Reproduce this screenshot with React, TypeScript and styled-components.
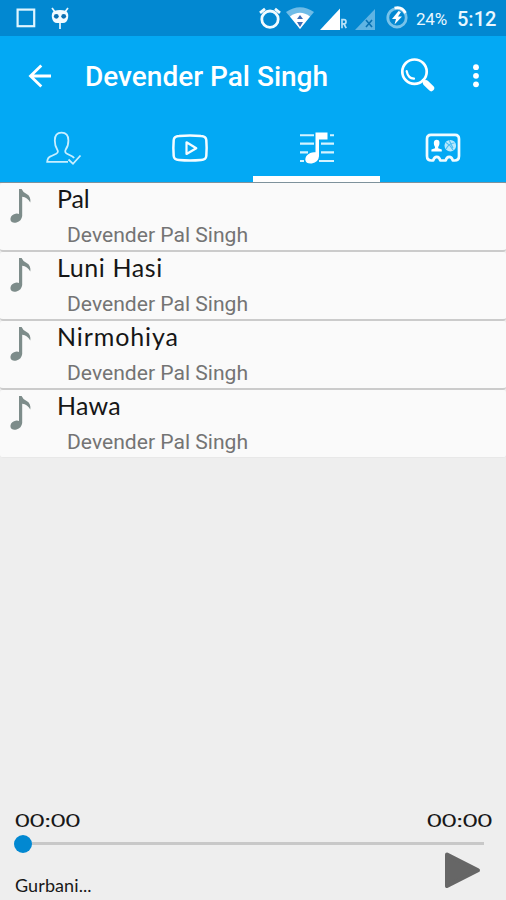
import React from "react";
import styled, { createGlobalStyle } from "styled-components";

const GlobalStyle = createGlobalStyle`
  * { box-sizing: border-box; }
  body { margin: 0; background: #eeeeee; }
`;

const Screen = styled.main`
  width: 506px;
  height: 900px;
  display: flex;
  flex-direction: column;
  background: #eeeeee;
  overflow: hidden;
  font-family: Roboto, sans-serif;
`;

const StatusBar = styled.header`
  height: 36px;
  flex: none;
  display: flex;
  align-items: flex-start;
  background: #0288d1;
  color: #e9f7ff;
`;

const Glyph = styled.svg<{ $gap?: number }>`
  flex: none;
  display: block;
  margin-left: ${(p) => p.$gap ?? 0}px;
  overflow: visible;
`;

const Spacer = styled.div`
  flex: 1;
`;

const Battery = styled.span`
  width: 49px;
  padding-left: 8px;
  font-size: 17px;
  line-height: 38px;
  letter-spacing: -0.2px;
  white-space: nowrap;
`;

const Clock = styled.span`
  width: 49px;
  font-size: 20px;
  font-weight: 500;
  line-height: 38px;
  letter-spacing: 0;
`;

const AppBar = styled.div`
  height: 79px;
  flex: none;
  display: flex;
  align-items: center;
  background: #03a9f4;
  color: #fff;
`;

const Title = styled.h1`
  margin: 3px 0 0 33px;
  flex: 1;
  font-size: 28px;
  line-height: 36px;
  font-weight: 500;
  white-space: nowrap;
`;

const Tabs = styled.nav`
  height: 67px;
  flex: none;
  display: grid;
  grid-template-columns: repeat(4, 1fr);
  background: #03a9f4;
`;

const Tab = styled.div<{ $active?: boolean }>`
  display: flex;
  justify-content: center;
  padding: 16px 0 0 1px;
  border-bottom: 6px solid ${(p) => (p.$active ? "#ffffff" : "transparent")};
`;

const List = styled.ul`
  list-style: none;
  margin: 0;
  padding: 0;
  flex: none;
  border-top: 1px solid #7e929c;
`;

const Row = styled.li`
  height: 69px;
  display: flex;
  background: #fafafa;
  border-radius: 3px;
  border-bottom: 2px solid #cbcbcb;
  &:last-child {
    height: 68px;
    border-bottom: 1px solid #e8e8e8;
  }
`;

const RowText = styled.div`
  margin-left: 25px;
`;

const Song = styled.div<{ $tracking: number }>`
  font-family: Lato, sans-serif;
  font-size: 25px;
  line-height: 30px;
  color: #161616;
  letter-spacing: ${(p) => p.$tracking}px;
  white-space: nowrap;
`;

const Artist = styled.div`
  margin: 9px 0 0 10px;
  font-size: 21.1px;
  line-height: 26px;
  color: #747474;
  white-space: nowrap;
`;

const Player = styled.footer`
  height: 101px;
  margin-top: auto;
  flex: none;
  display: flex;
  flex-direction: column;
  font-family: Lato, sans-serif;
  color: #181818;
`;

const Times = styled.div`
  height: 36px;
  padding: 8px 14px 0 15px;
  display: flex;
  justify-content: space-between;
`;

const Time = styled.span<{ $end?: boolean }>`
  font-size: 18px;
  line-height: 26px;
  transform: scaleX(1.41);
  transform-origin: ${(p) => (p.$end ? "right" : "left")};
`;

const Seek = styled.div`
  height: 17px;
  padding: 0 22px 0 14px;
  display: flex;
  align-items: center;
`;

const Thumb = styled.div`
  width: 18px;
  height: 18px;
  border-radius: 50%;
  background: #0288d1;
`;

const Track = styled.div`
  flex: 1;
  height: 3px;
  background: #c8c8c8;
`;

const NowPlaying = styled.div`
  flex: 1;
  display: flex;
  justify-content: space-between;
  padding: 0 24px 0 15px;
`;

const TrackName = styled.span`
  padding-top: 21px;
  font-size: 18px;
  line-height: 24px;
  letter-spacing: 0.1px;
`;

const SquareIcon = () => (
  <Glyph $gap={16} width="20" height="36" fill="none" stroke="#dff5ff" strokeWidth="2.2">
    <rect x="1.6" y="9.6" width="16.6" height="16.6" />
  </Glyph>
);

const RobotIcon = () => (
  <Glyph $gap={15} width="18" height="36">
    <path d="M1 8l3 4M17 8l-3 4M9 22v7" stroke="#e9f7ff" strokeWidth="1.7" fill="none" />
    <path d="M3 11Q9 9 15 11Q18 13 17 18Q16 23 12 23H6Q2 23 1 18Q0 13 3 11Z" fill="#f2fbff" />
    <circle cx="5.3" cy="16.3" r="2.4" fill="#0b70b2" />
    <circle cx="12.7" cy="16.3" r="2.4" fill="#0b70b2" />
  </Glyph>
);

const AlarmIcon = () => (
  <Glyph width="22" height="36" fill="none" stroke="#f2fbff">
    <circle cx="11" cy="19.2" r="8.2" strokeWidth="2.8" />
    <path d="M1 12.8l5-4M21 12.8l-5-4" strokeWidth="2.8" />
  </Glyph>
);

const WifiIcon = () => (
  <Glyph $gap={5} width="28" height="36">
    <path d="M0 12Q14 2.5 28 12L14 29Z" fill="#6fbce7" />
    <path d="M4 16.5Q14 9 24 16.5L14 29Z" fill="#fff" />
    <path d="M11 19l3-4 3 4zM11 22h6l-3 5z" fill="#3c6db8" />
  </Glyph>
);

const SignalIcon = () => (
  <Glyph $gap={6} width="28" height="36">
    <path d="M0 30L20 8.5V30Z" fill="#fff" />
    <path d="M22 28.2V19.7h2q2 0 2 2.1t-2 2.1h-2M24 24l2.2 4.2" fill="none" stroke="#b9e1f7" strokeWidth="1.7" />
  </Glyph>
);

const NoSignalIcon = () => (
  <Glyph $gap={7} width="20" height="36">
    <path d="M0 30L20 9V30Z" fill="#60b4e3" />
    <path d="M11 20l6 7M17 20l-6 7" stroke="#0871b3" strokeWidth="1.6" />
  </Glyph>
);

const ChargeIcon = () => (
  <Glyph $gap={11} width="22" height="36">
    <circle cx="11" cy="17.8" r="9.2" fill="none" stroke="#78c3ea" strokeWidth="2.8" />
    <path d="M8.5 8Q16 6 19.5 13" fill="none" stroke="#fff" strokeWidth="2.8" />
    <path d="M12.5 11L6 19h4l-1.5 5.5L16 16.5h-4L15 12Z" fill="#fff" />
  </Glyph>
);

const BackIcon = () => (
  <Glyph $gap={28} width="24" height="24" fill="none" stroke="#fff" strokeWidth="2.8">
    <path d="M23 12H3M13.3 1.5L2.5 12L13.3 22.5" />
  </Glyph>
);

const SearchIcon = () => (
  <Glyph width="37" height="36" fill="none" stroke="#fff" strokeLinecap="round">
    <circle cx="14.5" cy="13.7" r="12.2" strokeWidth="2.7" />
    <path d="M6.7 13.2Q8 20.2 14 20.7" strokeWidth="2.2" />
    <path d="M23.2 22.4L25 24.2" strokeWidth="3" />
    <path d="M26 25.2L31.2 30.2" strokeWidth="6" />
  </Glyph>
);

const MoreIcon = () => (
  <Glyph $gap={35} width="8" height="24" fill="#fff">
    <circle cx="4" cy="3.2" r="2.9" />
    <circle cx="4" cy="11.8" r="2.9" />
    <circle cx="4" cy="20.3" r="2.9" />
  </Glyph>
);

const PersonIcon = () => (
  <Glyph $gap={1} width="36" height="34" fill="none" stroke="#c9efff" strokeWidth="1.8">
    <path d="M22 30.8H1.2Q1.5 26.5 5 25.2L10.2 22.8Q13 21.2 11.2 18.4Q8.8 15 8.8 9.5Q8.8 1.7 15.5 1.7Q22.4 1.7 22.4 9.5Q22.4 15 19.8 18.4Q18.2 21.5 21 22.8L26 25.2Q27.5 26 28 27.2" />
    <path d="M22.5 28.5L27 32.8L34.5 24.5" />
  </Glyph>
);

const VideoIcon = () => (
  <Glyph width="36" height="34" fill="none" stroke="#f4fcff" strokeLinejoin="round">
    <path d="M7 5Q18 4 29 5Q34 5.3 34.3 9Q35 17 34.3 25Q34 28.7 29 29Q18 30 7 29Q2 28.7 1.7 25Q1 17 1.7 9Q2 5.3 7 5Z" strokeWidth="2.5" />
    <path d="M14.5 11.3V23L24.3 17.2Z" strokeWidth="2.2" />
  </Glyph>
);

const PlaylistIcon = () => (
  <Glyph width="36" height="34">
    <path d="M1 4.3H15M31 4.3H35M1 12.6H15M22 12.6H35M1 21.4H9M22 21.4H35M1 30H5M20 30H35" stroke="#d4f3ff" strokeWidth="2.1" />
    <path d="M16.5 1.5H28.5V8.5H20V25.2Q19.5 31.2 12.8 32.5Q7 33 6.3 29Q6 24.5 11.2 22Q14 20.8 16.5 21.3Z" fill="#fff" />
  </Glyph>
);

const ContactIcon = () => (
  <Glyph width="36" height="34">
    <path d="M6 3.8H30Q34 3.8 34 8V25Q34 29.5 29.5 29.5H27.8Q27 25.8 24.2 25.8Q21.5 25.8 20.7 29.5H15.3Q14.5 25.8 11.8 25.8Q9 25.8 8.2 29.5H6.5Q2 29.5 2 25V8Q2 3.8 6 3.8Z" fill="none" stroke="#f0fbff" strokeWidth="2.7" strokeLinejoin="round" />
    <path d="M8.8 12Q9 8.7 11.7 8.7Q14.5 8.7 14.5 12Q14.5 14.6 13.2 16V17.2L16.8 18.6V20.5H6.4V18.6L10 17.2V16Q8.8 14.6 8.8 12Z" fill="#fff" />
    <circle cx="25.3" cy="14.7" r="5.8" fill="#b9e9fd" />
    <path d="M21 11.5Q25.5 14 28 19M21 18Q24 12 29.4 12M24.2 9.2L28 17" fill="none" stroke="#49bdf3" strokeWidth="1.1" />
  </Glyph>
);

const NoteIcon = () => (
  <Glyph $gap={10} width="22" height="42" viewBox="0 -1 22 42">
    <path d="M9 5H11.6Q13 8.7 17 10.2Q21 12.4 20.3 18.5Q17.5 13.2 12.2 12.7V32Q11.5 37 6.5 38.5Q1.5 39.5.5 36Q0 32 4 30.2Q7 28.8 9 30Z" fill="#7d8c8a" />
  </Glyph>
);

const PlayIcon = () => (
  <Glyph width="38" height="40">
    <path d="M3 2.5L34 18.3L3 34Z" fill="#666" stroke="#666" strokeWidth="4" strokeLinejoin="round" />
  </Glyph>
);

const songs = [
  { title: "Pal", tracking: -0.2 },
  { title: "Luni Hasi", tracking: 0.6 },
  { title: "Nirmohiya", tracking: 0.9 },
  { title: "Hawa", tracking: 0.2 },
];

export default function App() {
  return (
    <Screen>
      <GlobalStyle />
      <StatusBar>
        <SquareIcon />
        <RobotIcon />
        <Spacer />
        <AlarmIcon />
        <WifiIcon />
        <SignalIcon />
        <NoSignalIcon />
        <ChargeIcon />
        <Battery>24%</Battery>
        <Clock>5:12</Clock>
      </StatusBar>
      <AppBar>
        <BackIcon />
        <Title>Devender Pal Singh</Title>
        <SearchIcon />
        <MoreIcon />
        <Glyph width="26" height="1" />
      </AppBar>
      <Tabs>
        <Tab><PersonIcon /></Tab>
        <Tab><VideoIcon /></Tab>
        <Tab $active><PlaylistIcon /></Tab>
        <Tab><ContactIcon /></Tab>
      </Tabs>
      <List>
        {songs.map((s) => (
          <Row key={s.title}>
            <NoteIcon />
            <RowText>
              <Song $tracking={s.tracking}>{s.title}</Song>
              <Artist>Devender Pal Singh</Artist>
            </RowText>
          </Row>
        ))}
      </List>
      <Player>
        <Times>
          <Time>00:00</Time>
          <Time $end>00:00</Time>
        </Times>
        <Seek>
          <Thumb />
          <Track />
        </Seek>
        <NowPlaying>
          <TrackName>Gurbani...</TrackName>
          <PlayIcon />
        </NowPlaying>
      </Player>
    </Screen>
  );
}
